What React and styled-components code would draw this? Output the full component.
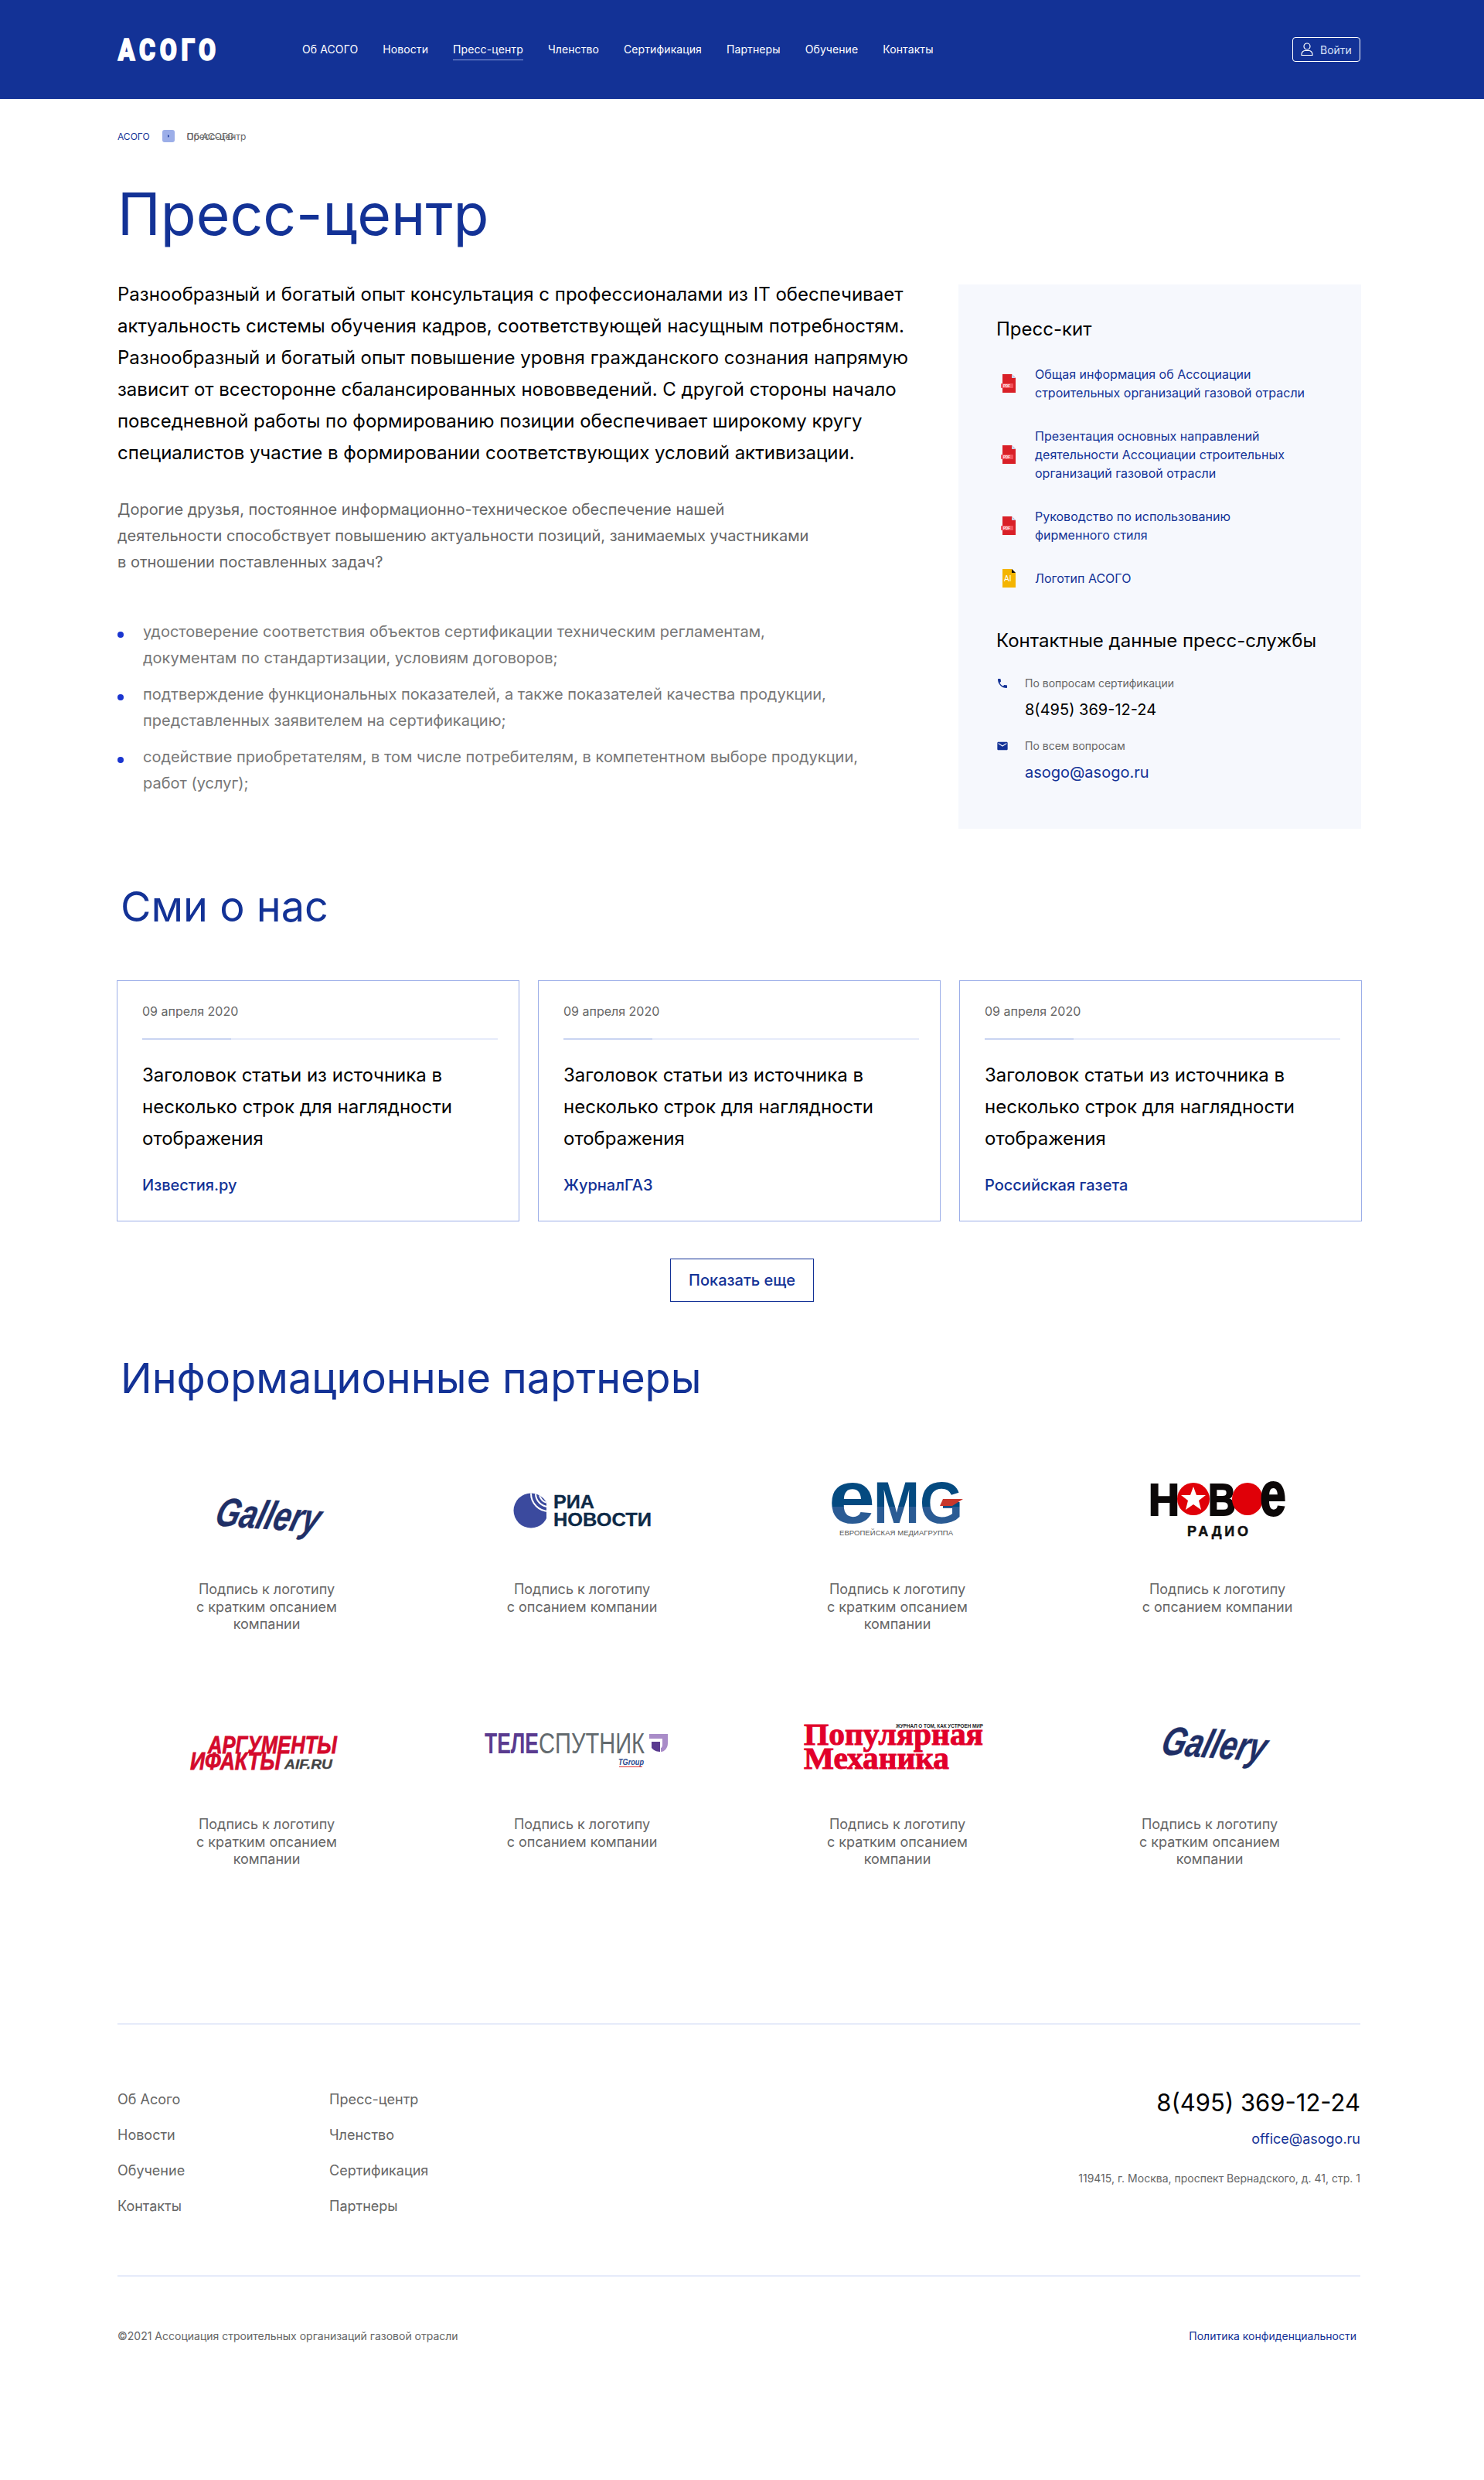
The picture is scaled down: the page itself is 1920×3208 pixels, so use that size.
import React from "react";
import styled, { createGlobalStyle } from "styled-components";
import { MdPhone, MdEmail } from "react-icons/md";

const BLUE = "#133296";
const FONT = `Inter, "Noto Sans", "Liberation Sans", sans-serif`;

const Global = createGlobalStyle`
  html, body { margin: 0; padding: 0; background: #fff; }
  body { font-family: ${FONT}; color: #000; }
  * { box-sizing: border-box; }
  p, h1, h2, h3, ul { margin: 0; padding: 0; }
  a { color: inherit; text-decoration: none; }
`;

const Page = styled.div`
  width: 1920px;
  min-height: 3208px;
  overflow: hidden;
`;
const Header = styled.header`
  height: 128px;
  background: ${BLUE};
  padding: 0 160px 0 152px;
  display: flex;
  align-items: center;
`;
const SiteLogoBox = styled.svg`
  display: block;
  overflow: visible;
`;
const Nav = styled.nav`
  display: flex;
  gap: 32px;
  margin-left: 111px;
`;
const NavLink = styled.a`
  font-size: 14px;
  letter-spacing: 0.1px;
  line-height: 26px;
  color: #fff;
  border-bottom: 1px solid ${p => (p.$active ? "#8fa0dd" : "transparent")};
  white-space: nowrap;
`;
const Login = styled.a`
  margin-left: auto;
  width: 88px;
  height: 32px;
  border: 1px solid #fff;
  border-radius: 4px;
  display: flex;
  align-items: center;
  gap: 9px;
  padding-left: 10px;
  font-size: 14px;
  color: #dbe2f7;
`;
const Main = styled.main`
  padding-left: 152px;
  width: 1768px;
`;
const Crumbs = styled.div`
  margin-top: 40px;
  height: 16px;
  display: flex;
  align-items: center;
  font-size: 12px;
  color: #666;
`;
const CrumbLink = styled.a`
  color: ${BLUE};
`;
const CrumbChip = styled.span`
  width: 16px;
  height: 16px;
  margin: 0 16px;
  border-radius: 3px;
  background: #9caee8;
  display: flex;
  align-items: center;
  justify-content: center;
  &::after {
    content: "";
    border-left: 2px solid ${BLUE};
    border-top: 2px solid transparent;
    border-bottom: 2px solid transparent;
  }
`;
const CrumbStack = styled.span`
  position: relative;
  display: block;
`;
const CrumbOver = styled.span`
  position: absolute;
  left: 0;
  top: 0;
  white-space: nowrap;
`;
const Title = styled.h1`
  margin-top: 53px;
  font-size: 75px;
  line-height: 80px;
  font-weight: 400;
  color: ${BLUE};
`;
const Intro = styled.section`
  margin-top: 43px;
  display: flex;
  justify-content: space-between;
  width: 1608px;
`;
const Left = styled.div`
  width: 1040px;
`;
const Lead = styled.p`
  font-size: 24px;
  line-height: 41px;
  color: #000;
`;
const Para = styled.p`
  margin-top: 36px;
  font-size: 20px;
  line-height: 34px;
  color: #666;
`;
const Bullets = styled.ul`
  margin-top: 56px;
  list-style: none;
  display: flex;
  flex-direction: column;
  gap: 13px;
`;
const Bullet = styled.li`
  position: relative;
  padding-left: 33px;
  font-size: 20px;
  line-height: 34px;
  color: #777;
  &::before {
    content: "";
    position: absolute;
    left: 0;
    top: 17px;
    width: 8px;
    height: 8px;
    border-radius: 50%;
    background: #1a35d0;
  }
`;
const Panel = styled.aside`
  margin-top: 8px;
  width: 521px;
  height: 704px;
  margin-right: -1px;
  background: #f6f8fd;
  padding: 42px 20px 0 49px;
`;
const PanelTitle = styled.h3`
  font-size: 24px;
  line-height: 32px;
  font-weight: 400;
  color: #000;
  margin-top: ${p => p.$top || 0}px;
`;
const Docs = styled.div`
  margin-top: 30px;
  display: flex;
  flex-direction: column;
  gap: 32px;
`;
const Doc = styled.a`
  display: flex;
  align-items: center;
  padding-left: 6px;
  gap: 25px;
  font-size: 16px;
  line-height: 24px;
  color: ${BLUE};
`;
const Contact = styled.div`
  display: flex;
  gap: 21px;
  margin-top: ${p => p.$top}px;
  svg { flex: none; color: ${BLUE}; margin-top: 2px; }
`;
const ContactLabel = styled.div`
  font-size: 14px;
  line-height: 20px;
  color: #666;
`;
const ContactValue = styled.div`
  margin-top: 10px;
  font-size: 20px;
  line-height: 28px;
  color: ${p => (p.$link ? BLUE : "#000")};
`;
const SectionTitle = styled.h2`
  font-size: 54px;
  line-height: 64px;
  font-weight: 400;
  color: ${BLUE};
  margin-top: ${p => p.$top}px;
  padding-left: 4px;
`;
const Cards = styled.div`
  margin: 63px 0 0 -1px;
  display: grid;
  grid-template-columns: repeat(3, 521px);
  gap: 24px;
`;
const Card = styled.article`
  height: 312px;
  border: 1px solid #9caee8;
  padding: 27px 27px 0 32px;
`;
const CardDate = styled.div`
  font-size: 16px;
  line-height: 24px;
  color: #666;
`;
const CardRule = styled.div`
  margin-top: 23px;
  height: 2px;
  background: linear-gradient(to right, #c9d4f2 115px, #e6ebfa 115px);
`;
const CardTitle = styled.h3`
  margin-top: 25px;
  font-size: 24px;
  line-height: 41px;
  font-weight: 400;
  color: #000;
`;
const CardSource = styled.a`
  display: block;
  margin-top: 28px;
  font-size: 20px;
  line-height: 24px;
  font-weight: 500;
  color: ${BLUE};
`;
const MoreRow = styled.div`
  margin-top: 48px;
  width: 1616px;
  display: flex;
  justify-content: center;
`;
const MoreButton = styled.a`
  width: 186px;
  height: 56px;
  border: 1px solid ${BLUE};
  display: flex;
  align-items: center;
  justify-content: center;
  font-size: 20px;
  font-weight: 500;
  color: ${BLUE};
`;
const Partners = styled.div`
  margin-top: 90px;
  display: grid;
  grid-template-columns: repeat(4, 386px);
  column-gap: 22px;
  row-gap: 96px;
`;
const Partner = styled.div`
  height: 208px;
`;
const LogoBox = styled.svg`
  display: block;
  width: 386px;
  height: 100px;
  overflow: visible;
`;
const LT = styled.text`
  font-family: ${p => p.$font || '"Liberation Sans"'}, sans-serif;
  font-size: ${p => p.$size}px;
  font-weight: ${p => p.$weight || 700};
  font-style: ${p => (p.$italic ? "italic" : "normal")};
  fill: ${p => p.$fill || "#000"};
  stroke: ${p => p.$stroke ? p.$fill : "none"};
  stroke-width: ${p => p.$stroke || 0};
`;
const Caption = styled.p`
  margin-top: 40px;
  margin-left: ${p => p.$shift || 0}px;
  font-size: 18px;
  line-height: 22.5px;
  color: #666;
  text-align: center;
`;
const Footer = styled.footer`
  width: 1608px;
  margin: 200px 0 0 152px;
`;
const FooterTop = styled.div`
  border-top: 2px solid #e6ebfa;
  border-bottom: 2px solid #e6ebfa;
  padding: 85px 0 77px;
  display: flex;
  justify-content: space-between;
`;
const FooterLinks = styled.div`
  display: grid;
  grid-template-columns: 274px 200px;
  row-gap: 22px;
`;
const FooterLink = styled.a`
  font-size: 18px;
  line-height: 24px;
  color: #666;
`;
const FooterContacts = styled.div`
  margin-top: -4px;
  text-align: right;
`;
const FooterPhone = styled.div`
  font-size: 31px;
  line-height: 40px;
  color: #000;
`;
const FooterMail = styled.a`
  display: block;
  margin-top: 15px;
  font-size: 18px;
  line-height: 24px;
  color: ${BLUE};
`;
const FooterAddress = styled.div`
  margin-top: 29px;
  font-size: 14px;
  line-height: 20px;
  color: #666;
`;
const FooterBottom = styled.div`
  padding: 67px 5px 0 0;
  display: flex;
  justify-content: space-between;
  font-size: 14px;
  line-height: 20px;
  color: #666;
`;
const Policy = styled.a`
  color: ${BLUE};
`;

const SiteLogo = () => (
  <SiteLogoBox width="128" height="40" viewBox="0 0 128 40">
    <LT transform="scale(0.82 1)" x="1" y="34" $font="Roboto" $weight={900} $size={39} $fill="#fff" $stroke={1.6} textLength="154" lengthAdjust="spacing">АСОГО</LT>
  </SiteLogoBox>
);
const UserIcon = () => (
  <svg width="16" height="18" viewBox="0 0 16 18" fill="none" stroke="#fff" strokeWidth="1.2">
    <circle cx="8" cy="5" r="4" />
    <path d="M1 16.5V15c0-2.5 2.5-4.5 4.5-4.5h5c2 0 4.5 2 4.5 4.5v1.5z" />
  </svg>
);
const PdfIcon = () => (
  <svg width="19" height="24" viewBox="0 0 19 24">
    <path d="M2 0h12l5 5v19H2z" fill="#d92027" />
    <path d="M14 0l5 5h-5z" fill="#c6d8f5" />
    <rect x="0" y="12" width="16" height="6" rx="1" fill="#f0525a" />
    <LT x="3" y="16.6" $size={4.5} $fill="#fff">PDF</LT>
  </svg>
);
const AiIcon = () => (
  <svg width="19" height="24" viewBox="0 0 19 24">
    <path d="M2 0h12l5 5v19H2z" fill="#f4b400" />
    <path d="M14 0l5 5h-5z" fill="#111" />
    <LT x="4" y="16" $size={10} $weight={400} $fill="#fff">AI</LT>
  </svg>
);

const Gallery = ({ dx = 0, dy = 0 }) => (
  <LT transform={`translate(${124 + dx} ${68 + dy}) rotate(4) skewX(-12)`} x="0" y="0" $italic $size={52} $fill="#1f2f66" $stroke={0.4} textLength="134" lengthAdjust="spacingAndGlyphs">Gallery</LT>
);
const logos = [
  <Gallery />,
  <>
    <defs>
      <clipPath id="ria"><circle cx="127" cy="49" r="22.5" /></clipPath>
    </defs>
    <g clipPath="url(#ria)">
      <rect x="104" y="26" width="43" height="46" fill="#3b4a9e" />
      <g fill="none" stroke="#fff" strokeWidth="2">
        <circle cx="150" cy="27" r="7" />
        <circle cx="150" cy="27" r="12" />
        <circle cx="150" cy="27" r="17" />
        <circle cx="150" cy="27" r="23" />
      </g>
    </g>
    <LT x="156" y="46" $size={23} $fill="#0e2a47" $stroke={0.3} textLength="53" lengthAdjust="spacingAndGlyphs">РИА</LT>
    <LT x="156" y="69" $size={23} $fill="#0e2a47" $stroke={0.3} textLength="127" lengthAdjust="spacingAndGlyphs">НОВОСТИ</LT>
  </>,
  <>
    <defs>
      <linearGradient id="emg" gradientUnits="userSpaceOnUse" x1="0" y1="12" x2="0" y2="66">
        <stop offset="0.6" stopColor="#044a80" />
        <stop offset="0.6" stopColor="#2a5b94" />
      </linearGradient>
    </defs>
    <LT x="104" y="65" $size={96} $fill="url(#emg)" $stroke={0} textLength="60" lengthAdjust="spacingAndGlyphs">e</LT>
    <LT x="162" y="65" $size={76} $fill="url(#emg)" textLength="116" lengthAdjust="spacingAndGlyphs">MG</LT>
    <polygon points="252,34 278,34 264,43 248,43" fill="#c8372d" />
    <LT x="118" y="81" $size={9.5} $weight={400} $fill="#555" textLength="147">ЕВРОПЕЙСКАЯ МЕДИАГРУППА</LT>
  </>,
  <>
    <LT x="110" y="55" $size={58} $fill="#0c0808" $stroke={2} textLength="40" lengthAdjust="spacingAndGlyphs">Н</LT>
    <ellipse cx="168" cy="34" rx="21" ry="21" fill="#e00008" />
    <polygon points="168,18 172,29 184,29 175,36 178,48 168,41 158,48 161,36 152,29 164,29" fill="#fff" />
    <LT x="187" y="55" $size={58} $fill="#0c0808" $stroke={2} textLength="36" lengthAdjust="spacingAndGlyphs">В</LT>
    <ellipse cx="238" cy="34" rx="20" ry="21" fill="#e00008" />
    <LT x="254" y="55" $size={80} $fill="#0c0808" $stroke={2} textLength="34" lengthAdjust="spacingAndGlyphs">е</LT>
    <LT x="160" y="82" $size={18} $fill="#111" $stroke={0.5} textLength="79">РАДИО</LT>
  </>,
  <>
    <LT x="117" y="59" $size={32} $italic $fill="#d40a2c" $stroke={0.8} textLength="167" lengthAdjust="spacingAndGlyphs">АРГУМЕНТЫ</LT>
    <LT x="94" y="80" $size={32} $italic $fill="#d40a2c" $stroke={0.8} textLength="117" lengthAdjust="spacingAndGlyphs">ИФАКТЫ</LT>
    <LT x="216" y="79" $size={17} $italic $fill="#444" $stroke={0.3} textLength="62" lengthAdjust="spacingAndGlyphs">AIF.RU</LT>
  </>,
  <>
    <LT x="67" y="59" $size={36} $fill="#5a3b8f" textLength="70" lengthAdjust="spacingAndGlyphs">ТЕЛЕ</LT>
    <LT x="137" y="59" $size={36} $weight={400} $fill="#636a6e" textLength="137" lengthAdjust="spacingAndGlyphs">СПУТНИК</LT>
    <path d="M280 34h24v12c0 6-4 11-9 11v-5c1 0 2-2 2-4V40h-17z" fill="#a98cc8" />
    <path d="M283 44h11v13c-6 0-9-3-11-5z" fill="#5a3b8f" />
    <LT x="240" y="74" $size={11} $italic $fill="#2a4a90" textLength="33" lengthAdjust="spacingAndGlyphs">TGroup</LT>
    <rect x="241" y="76" width="30" height="1" fill="#d33" />
  </>,
  <>
    <LT x="191" y="26" $size={6.4} $fill="#222" textLength="113" lengthAdjust="spacingAndGlyphs">ЖУРНАЛ О ТОМ, КАК УСТРОЕН МИР</LT>
    <LT x="72" y="48" $font='"Liberation Serif"' $size={41} $fill="#e2002a" $stroke={1} textLength="232" lengthAdjust="spacingAndGlyphs">Популярная</LT>
    <LT x="72" y="79" $font='"Liberation Serif"' $size={41} $fill="#e2002a" $stroke={1} textLength="188" lengthAdjust="spacingAndGlyphs">Механика</LT>
  </>,
  <Gallery dx={0} dy={-8} />,
];
const partners = [
  { text: ["Подпись к логотипу", "с кратким опсанием", "компании"] },
  { text: ["Подпись к логотипу", "с опсанием компании"] },
  { text: ["Подпись к логотипу", "с кратким опсанием", "компании"] },
  { text: ["Подпись к логотипу", "с опсанием компании"], shift: 12 },
  { text: ["Подпись к логотипу", "с кратким опсанием", "компании"] },
  { text: ["Подпись к логотипу", "с опсанием компании"] },
  { text: ["Подпись к логотипу", "с кратким опсанием", "компании"] },
  { text: ["Подпись к логотипу", "с кратким опсанием", "компании"], shift: -8 },
];
const Lines = ({ items }) => items.map((t, i) => <React.Fragment key={i}>{i > 0 && <br />}{t}</React.Fragment>);

const cards = ["Известия.ру", "ЖурналГАЗ", "Российская газета"];
const nav = ["Об АСОГО", "Новости", "Пресс-центр", "Членство", "Сертификация", "Партнеры", "Обучение", "Контакты"];
const footerLinks = ["Об Асого", "Пресс-центр", "Новости", "Членство", "Обучение", "Сертификация", "Контакты", "Партнеры"];

export default function App() {
  return (
    <Page>
      <Global />
      <Header>
        <SiteLogo />
        <Nav>
          {nav.map(n => <NavLink key={n} $active={n === "Пресс-центр"}>{n}</NavLink>)}
        </Nav>
        <Login><UserIcon />Войти</Login>
      </Header>
      <Main>
        <Crumbs>
          <CrumbLink>АСОГО</CrumbLink>
          <CrumbChip />
          <CrumbStack>Пресс-центр<CrumbOver>Об АСОГО</CrumbOver></CrumbStack>
        </Crumbs>
        <Title>Пресс-центр</Title>
        <Intro>
          <Left>
            <Lead>
              Разнообразный и богатый опыт консультация с профессионалами из IT обеспечивает<br />
              актуальность системы обучения кадров, соответствующей насущным потребностям.<br />
              Разнообразный и богатый опыт повышение уровня гражданского сознания напрямую<br />
              зависит от всесторонне сбалансированных нововведений. С другой стороны начало<br />
              повседневной работы по формированию позиции обеспечивает широкому кругу<br />
              специалистов участие в формировании соответствующих условий активизации.
            </Lead>
            <Para>
              Дорогие друзья, постоянное информационно-техническое обеспечение нашей<br />
              деятельности способствует повышению актуальности позиций, занимаемых участниками<br />
              в отношении поставленных задач?
            </Para>
            <Bullets>
              <Bullet>удостоверение соответствия объектов сертификации техническим регламентам,<br />документам по стандартизации, условиям договоров;</Bullet>
              <Bullet>подтверждение функциональных показателей, а также показателей качества продукции,<br />представленных заявителем на сертификацию;</Bullet>
              <Bullet>содействие приобретателям, в том числе потребителям, в компетентном выборе продукции,<br />работ (услуг);</Bullet>
            </Bullets>
          </Left>
          <Panel>
            <PanelTitle>Пресс-кит</PanelTitle>
            <Docs>
              <Doc><PdfIcon /><span>Общая информация об Ассоциации<br />строительных организаций газовой отрасли</span></Doc>
              <Doc><PdfIcon /><span>Презентация основных направлений<br />деятельности Ассоциации строительных<br />организаций газовой отрасли</span></Doc>
              <Doc><PdfIcon /><span>Руководство по использованию<br />фирменного стиля</span></Doc>
              <Doc><AiIcon /><span>Логотип АСОГО</span></Doc>
            </Docs>
            <PanelTitle $top={53}>Контактные данные пресс-службы</PanelTitle>
            <Contact $top={29}>
              <MdPhone size={16} />
              <div>
                <ContactLabel>По вопросам сертификации</ContactLabel>
                <ContactValue>8(495) 369-12-24</ContactValue>
              </div>
            </Contact>
            <Contact $top={23}>
              <MdEmail size={16} />
              <div>
                <ContactLabel>По всем вопросам</ContactLabel>
                <ContactValue $link>asogo@asogo.ru</ContactValue>
              </div>
            </Contact>
          </Panel>
        </Intro>
        <SectionTitle $top={69}>Сми о нас</SectionTitle>
        <Cards>
          {cards.map(c => (
            <Card key={c}>
              <CardDate>09 апреля 2020</CardDate>
              <CardRule />
              <CardTitle>Заголовок статьи из источника в<br />несколько строк для наглядности<br />отображения</CardTitle>
              <CardSource>{c}</CardSource>
            </Card>
          ))}
        </Cards>
        <MoreRow><MoreButton>Показать еще</MoreButton></MoreRow>
        <SectionTitle $top={67}>Информационные партнеры</SectionTitle>
        <Partners>
          {partners.map((p, i) => (
            <Partner key={i}>
              <LogoBox viewBox="0 0 386 100">{logos[i]}</LogoBox>
              <Caption $shift={p.shift}><Lines items={p.text} /></Caption>
            </Partner>
          ))}
        </Partners>
      </Main>
      <Footer>
        <FooterTop>
          <FooterLinks>
            {footerLinks.map(l => <FooterLink key={l}>{l}</FooterLink>)}
          </FooterLinks>
          <FooterContacts>
            <FooterPhone>8(495) 369-12-24</FooterPhone>
            <FooterMail>office@asogo.ru</FooterMail>
            <FooterAddress>119415, г. Москва, проспект Вернадского, д. 41, стр. 1</FooterAddress>
          </FooterContacts>
        </FooterTop>
        <FooterBottom>
          <span>©2021 Ассоциация строительных организаций газовой отрасли</span>
          <Policy>Политика конфиденциальности</Policy>
        </FooterBottom>
      </Footer>
    </Page>
  );
}
